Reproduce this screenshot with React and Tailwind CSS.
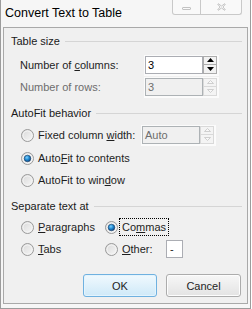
import React from "react";

function Radio({ checked }) {
  return (
    <svg width="13" height="13" viewBox="0 0 13 13" className="shrink-0">
      <defs>
        <linearGradient id="rbg" x1="0" y1="0" x2="1" y2="1">
          <stop offset="0" stopColor="#d8d8d8" />
          <stop offset="1" stopColor="#f8f8f8" />
        </linearGradient>
        <radialGradient id="rdot" cx="0.4" cy="0.35" r="0.7">
          <stop offset="0" stopColor="#7fd1ff" />
          <stop offset="0.5" stopColor="#1e88d0" />
          <stop offset="1" stopColor="#0d3d78" />
        </radialGradient>
      </defs>
      <circle cx="6.5" cy="6.5" r="6" fill="url(#rbg)" stroke="#9a9a9a" strokeWidth="1" />
      <circle cx="6.5" cy="6.5" r="4.5" fill="none" stroke="#f4f4f4" strokeWidth="1" />
      {checked && <circle cx="6.5" cy="6.5" r="3.3" fill="url(#rdot)" stroke="#1a3e66" strokeWidth="0.6" />}
    </svg>
  );
}

function Spinner({ disabled }) {
  const c = disabled ? "#c5c5c5" : "#000";
  return (
    <div className="w-[14px] h-[18px] flex flex-col">
      <div className={`h-[9px] flex items-center justify-center border ${disabled ? "border-[#d9d9d9] bg-[#f4f4f4]" : "border-[#acacac] bg-[#f2f2f2]"}`}>
        <svg width="7" height="4" viewBox="0 0 7 4">
          {disabled ? (
            <path d="M0.5 3.5 L3.5 0.5 L6.5 3.5 Z" fill="#f8f8f8" stroke={c} strokeWidth="0.8" />
          ) : (
            <path d="M0 4 L3.5 0 L7 4 Z" fill={c} />
          )}
        </svg>
      </div>
      <div className={`h-[9px] flex items-center justify-center border border-t-0 ${disabled ? "border-[#d9d9d9] bg-[#f4f4f4]" : "border-[#acacac] bg-[#f2f2f2]"}`}>
        <svg width="7" height="4" viewBox="0 0 7 4">
          {disabled ? (
            <path d="M0.5 0.5 L3.5 3.5 L6.5 0.5 Z" fill="#f8f8f8" stroke={c} strokeWidth="0.8" />
          ) : (
            <path d="M0 0 L3.5 4 L7 0 Z" fill={c} />
          )}
        </svg>
      </div>
    </div>
  );
}

function SpinBox({ value, disabled }) {
  return (
    <div className="flex bg-[#fbfbfb] pl-px pt-px pr-[2px] pb-[2px]">
      <div
        className={`w-[58px] h-[18px] border flex items-center pl-[2px] ${
          disabled ? "border-[#adb2b5] bg-[#f0f0f0] text-[#6d6d6d]" : "border-[#abadb3] bg-white text-[#000]"
        }`}
      >
        {value}
      </div>
      <Spinner disabled={disabled} />
    </div>
  );
}

function Header({ children, className = "" }) {
  return (
    <div className={`h-[16px] flex items-center pl-[7px] pr-[5px] ${className}`}>
      <span className="text-[#1a1a1a]">{children}</span>
      <div className="flex-1 ml-[5px] h-px bg-[#d5d5d5]" />
    </div>
  );
}

export default function App() {
  return (
    <div
      className="w-[252px] h-[309px] bg-white text-[11px] leading-[14px] text-[#1e1e1e]"
      style={{ fontFamily: '"Liberation Sans", Arial, sans-serif' }}
    >
      <div className="w-[251px] h-[309px] border-x border-b border-[#9c9c9c] bg-[#f6f6f6] flex flex-col">
        {/* title bar */}
        <div className="h-[27px] flex items-start pl-[4px] pr-[8px]">
          <div className="pt-[6px] text-[12.5px] leading-[15px] text-black">Convert Text to Table</div>
          <div className="ml-auto flex h-[15px]">
            <div className="w-[29px] h-[15px] border border-t-0 border-[#c9c9c9] rounded-bl-[3px] bg-[#f9f9f9] flex items-center justify-center">
              <div className="w-[9px] h-[3px] border border-[#c2c2c2] rounded-[1px] mt-[2px]" />
            </div>
            <div className="w-[41px] h-[15px] border border-t-0 border-l-0 border-[#c9c9c9] rounded-br-[3px] bg-[#f9f9f9] flex items-center justify-center">
              <svg width="9" height="8" viewBox="0 0 9 8">
                <path d="M1 0.5 L4.5 3 L8 0.5 M1 7.5 L4.5 5 L8 7.5 M0.5 1 L3 4 L0.5 7 M8.5 1 L6 4 L8.5 7" fill="none" stroke="#c4c4c4" strokeWidth="1" />
              </svg>
            </div>
          </div>
        </div>

        {/* panel */}
        <div className="ml-[2px] w-[245px] h-[277px] border border-[#a9a9a9] bg-[#f0f0f0] flex flex-col pt-[5px]">
          <Header>Table size</Header>

          <div className="mt-[5px] h-[22px] flex items-center pl-[16px]">
            <div className="w-[124px]">
              Number of <span className="underline">c</span>olumns:
            </div>
            <SpinBox value="3" />
          </div>
          <div className="h-[22px] flex items-center pl-[16px]">
            <div className="w-[124px] text-[#6d6d6d]">Number of rows:</div>
            <SpinBox value="3" disabled />
          </div>

          <Header className="mt-[7px]">AutoFit behavior</Header>

          <div className="mt-[3px] h-[22px] flex items-center pl-[17px]">
            <Radio />
            <div className="ml-[4px] w-[103px]">
              Fixed column <span className="underline">w</span>idth:
            </div>
            <SpinBox value="Auto" disabled />
          </div>
          <div className="mt-[1px] h-[22px] flex items-center pl-[17px]">
            <Radio checked />
            <div className="ml-[4px]">
              Auto<span className="underline">F</span>it to contents
            </div>
          </div>
          <div className="h-[22px] flex items-center pl-[17px]">
            <Radio />
            <div className="ml-[4px]">
              AutoFit to win<span className="underline">d</span>ow
            </div>
          </div>

          <Header className="mt-[7px]">Separate text at</Header>

          <div className="mt-[2px] h-[22px] flex items-center pl-[17px]">
            <div className="w-[84px] flex items-center">
              <Radio />
              <div className="ml-[4px]">
                <span className="underline">P</span>aragraphs
              </div>
            </div>
            <Radio checked />
            <div className="ml-[1px] px-[2px] h-[18px] flex items-center border border-dotted border-black">
              Co<span className="underline">m</span>mas
            </div>
          </div>
          <div className="h-[22px] flex items-center pl-[17px]">
            <div className="w-[84px] flex items-center">
              <Radio />
              <div className="ml-[4px]">
                <span className="underline">T</span>abs
              </div>
            </div>
            <Radio />
            <div className="ml-[4px] w-[44px]">
              <span className="underline">O</span>ther:
            </div>
            <div className="w-[17px] h-[18px] border border-[#abadb3] bg-white flex items-center pl-[3px]">-</div>
          </div>

          <div className="mt-[14px] flex justify-end gap-[9px] pr-[6px]">
            <button className="w-[74px] h-[23px] rounded-[3px] border border-[#6fb1e0] bg-gradient-to-b from-[#f0f9fe] to-[#cfe9f8] shadow-[inset_0_0_0_1px_#e4f4fd] text-[#1e1e1e] text-[11px]">
              OK
            </button>
            <button className="w-[75px] h-[23px] rounded-[3px] border border-[#acacac] bg-gradient-to-b from-[#f7f7f7] to-[#e3e3e3] shadow-[inset_0_0_0_1px_#fdfdfd] text-[#1e1e1e] text-[11px]">
              Cancel
            </button>
          </div>
        </div>
      </div>
    </div>
  );
}
